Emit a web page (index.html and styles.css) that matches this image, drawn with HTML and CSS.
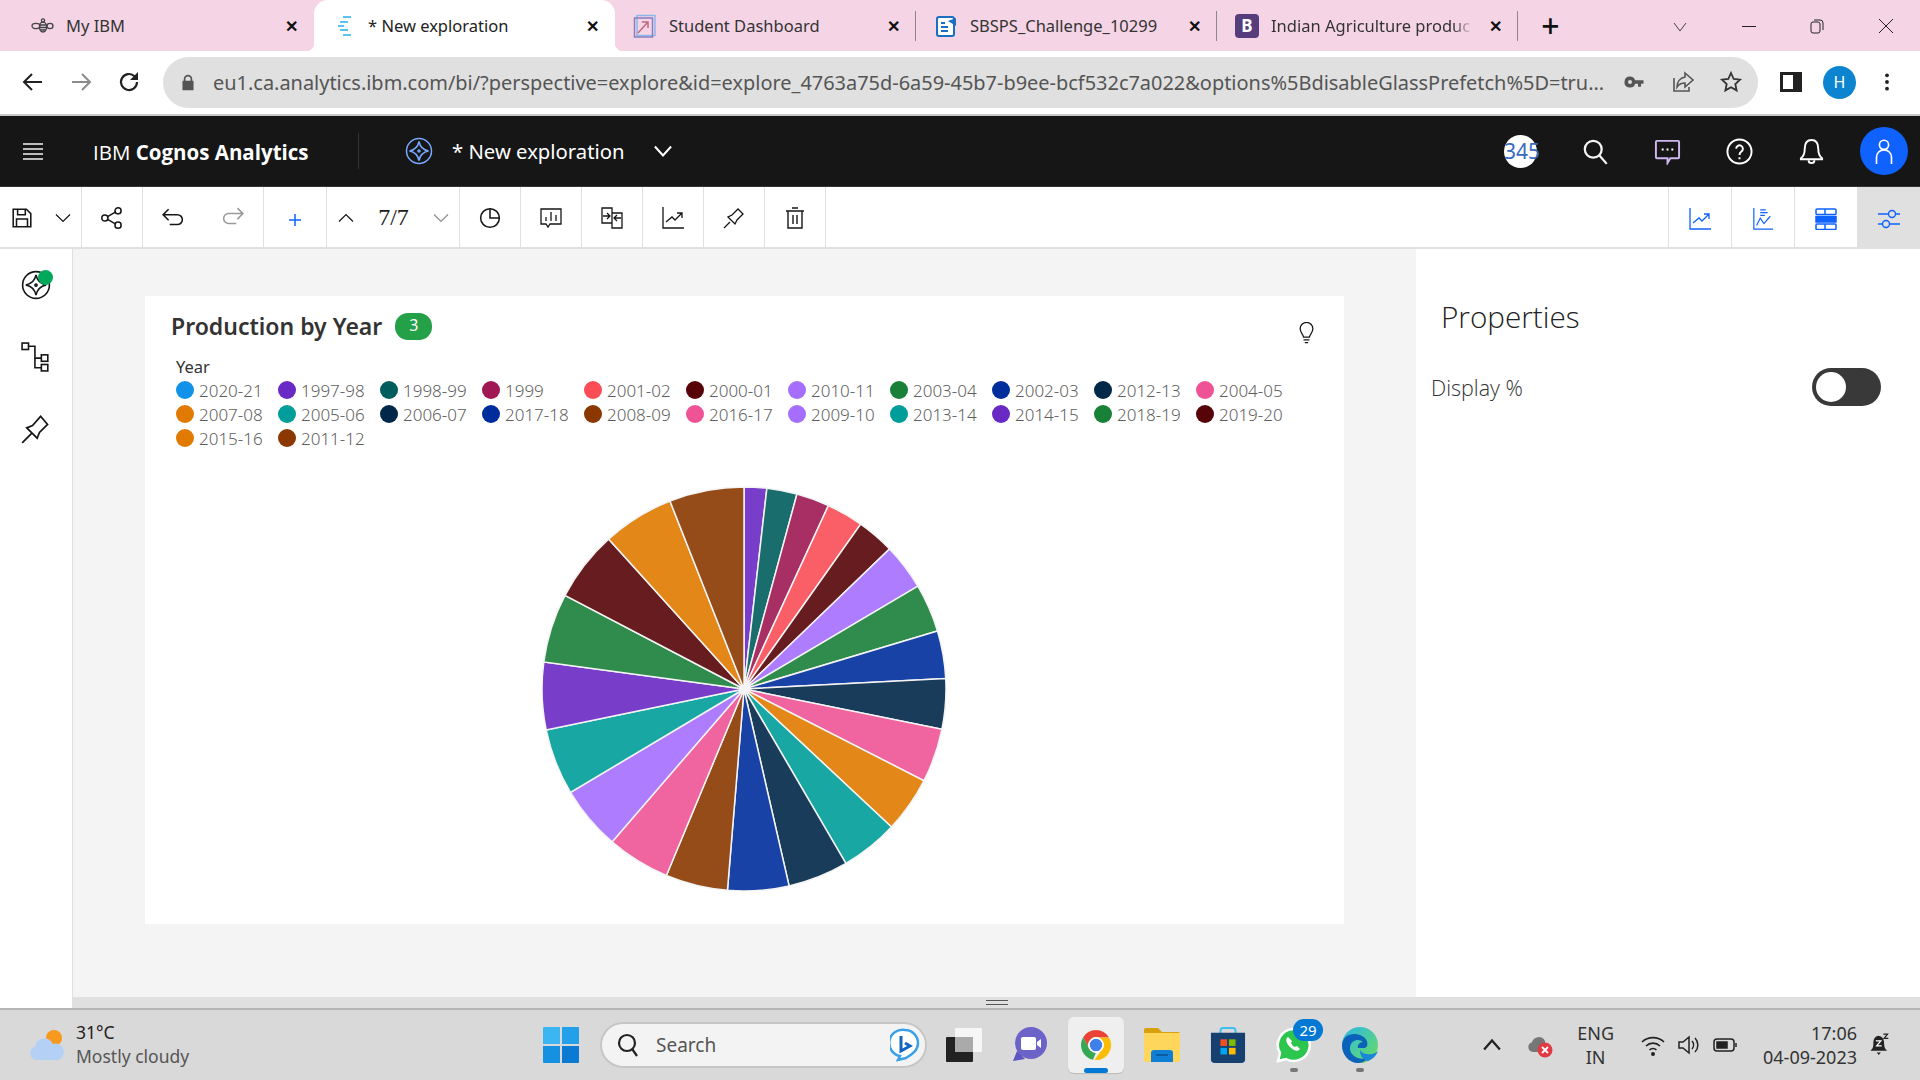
FILE: index.html
```html
<!DOCTYPE html>
<html lang="en">
<head>
    <meta charset="UTF-8">
    <title>New exploration - IBM Cognos Analytics</title>
    <link rel="stylesheet" href="styles.css">
</head>
<body>
    <div class="tabstrip">
        <div class="tab tab-first">
            <svg class="tab-icon" viewBox="0 0 24 24" fill="none" stroke="#444" stroke-width="1.3"><ellipse cx="13" cy="13" rx="3.6" ry="5"/><path d="M10 11h6M9.6 13.5h6.8M10 16h6"/><ellipse cx="6" cy="12" rx="4" ry="2.6"/><ellipse cx="20" cy="12" rx="3" ry="2.6"/><circle cx="13" cy="6.5" r="1.6"/></svg>
            <span class="tab-title">My IBM</span>
            <span class="tab-close">&#10005;</span>
        </div>
        <div class="tab tab-active">
            <svg class="tab-icon" viewBox="0 0 24 24"><path d="M11 2h8v2h-8zM8 7h8v2H8zM6 11h6v2H6zM8 15h8v2H8zM11 20h8v2h-8z" fill="#5cc3f0"/></svg>
            <span class="tab-title">* New exploration</span>
            <span class="tab-close">&#10005;</span>
        </div>
        <div class="tab tab-sep">
            <svg class="tab-icon" viewBox="0 0 24 24" fill="none"><rect x="4" y="1.5" width="18" height="20" stroke="#8ab8e8" stroke-width="1.5"/><rect x="1.5" y="4" width="18" height="19" stroke="#8a7cc0" stroke-width="1.5"/><path d="M5 19L14 9M9 8h6v6" stroke="#c06a80" stroke-width="1.5"/></svg>
            <span class="tab-title">Student Dashboard</span>
            <span class="tab-close">&#10005;</span>
        </div>
        <div class="tab tab-sep">
            <svg class="tab-icon" viewBox="0 0 24 24" fill="none"><rect x="3" y="3" width="17" height="19" rx="2" fill="#fff" stroke="#1a6fc0" stroke-width="2"/><path d="M7 9h4M7 13h7M7 17h7" stroke="#1a6fc0" stroke-width="2"/><path d="M14 7l8-3v8z" fill="#1a6fc0"/></svg>
            <span class="tab-title">SBSPS_Challenge_10299</span>
            <span class="tab-close">&#10005;</span>
        </div>
        <div class="tab tab-sep">
            <span class="bootstrap-mark">B</span>
            <span class="tab-title tab-title-fade">Indian Agriculture produc</span>
            <span class="tab-close">&#10005;</span>
        </div>
        <span class="new-tab">+</span>
        <div class="window-controls">
            <svg viewBox="0 0 16 16" fill="none" stroke="#444"><path d="M2 5l6 8 6-8"/></svg>
            <svg viewBox="0 0 16 16" fill="none" stroke="#222"><path d="M1 8.5h14"/></svg>
            <svg viewBox="0 0 16 16" fill="none" stroke="#222"><rect x="2" y="4" width="9" height="11" rx="2"/><path d="M5 2h6a3 3 0 0 1 3 3v7"/></svg>
            <svg viewBox="0 0 16 16" fill="none" stroke="#222"><path d="M1 1l14 14M15 1L1 15"/></svg>
        </div>
    </div>

    <div class="addressbar">
        <div class="nav-buttons">
            <svg viewBox="0 0 24 24" fill="none" stroke="#222" stroke-width="2"><path d="M21 12H4M11 4l-8 8 8 8"/></svg>
            <svg viewBox="0 0 24 24" fill="none" stroke="#8a8a8a" stroke-width="2"><path d="M3 12h17M13 4l8 8-8 8"/></svg>
            <svg viewBox="0 0 24 24" fill="none" stroke="#222" stroke-width="2.2"><path d="M20 12a8 8 0 1 1-2.500-5.800"/><path d="M21 2v8h-8z" fill="#222" stroke="none"/></svg>
        </div>
        <div class="omnibox">
            <svg class="lock" viewBox="0 0 16 20"><path d="M3 8V6a5 5 0 0 1 10 0v2h1.5v11h-13V8zm2 0h6V6a3 3 0 0 0-6 0z" fill="#555"/></svg>
            <span class="url">eu1.ca.analytics.ibm.com/bi/?perspective=explore&amp;id=explore_4763a75d-6a59-45b7-b9ee-bcf532c7a022&amp;options%5BdisableGlassPrefetch%5D=tru...</span>
            <svg class="omni-icon" viewBox="0 0 24 24" fill="#555"><path d="M7 6.5a5.5 5.5 0 1 0 5.2 7.2H15v3h3v-3h2.5v-3.4h-8.3A5.5 5.5 0 0 0 7 6.5zm0 3.5a2 2 0 1 1 0 4 2 2 0 0 1 0-4z"/></svg>
            <svg class="omni-icon" viewBox="0 0 24 24" fill="none" stroke="#555" stroke-width="1.6"><path d="M3 8v13h15v-4"/><path d="M14 3l8 7-8 7v-4c-4 0-6 1-8 4 0-5 3-9 8-10z"/></svg>
            <svg class="omni-icon" viewBox="0 0 24 24" fill="none" stroke="#333" stroke-width="1.8"><path d="M12 3l2.7 6 6.3.7-4.7 4.3 1.3 6.4-5.600-3.200-5.600 3.200 1.300-6.400L3 9.700 9.300 9z"/></svg>
        </div>
        <div class="browser-actions">
            <svg class="side-panel" viewBox="0 0 22 20"><path d="M0 0h22v20H0z" fill="#222"/><path d="M3 3h10v14H3z" fill="#fff"/></svg>
            <span class="profile">H</span>
            <svg viewBox="0 0 24 24" fill="#222"><circle cx="12" cy="4" r="2.300"/><circle cx="12" cy="12" r="2.300"/><circle cx="12" cy="20" r="2.300"/></svg>
        </div>
    </div>

    <header class="appbar">
        <svg class="hamburger" viewBox="0 0 20 20" stroke="#f4f4f4" stroke-width="1.500"><path d="M0 3h20M0 8h20M0 13h20M0 18h20"/></svg>
        <div class="brand">IBM <b>Cognos Analytics</b></div>
        <svg class="explore-icon" viewBox="0 0 28 28" fill="none" stroke="#78a9ff" stroke-width="1.500"><circle cx="14" cy="14" r="12.500"/><path d="M14 4.500c1 5 4.500 8.500 9.500 9.500-5 1-8.500 4.500-9.500 9.500-1-5-4.500-8.500-9.500-9.500 5-1 8.500-4.500 9.500-9.500z"/><circle cx="14" cy="14" r="1"/></svg>
        <span class="explore-title">* New exploration</span>
        <svg class="explore-chevron" viewBox="0 0 20 20" fill="none" stroke="#fff" stroke-width="2.200"><path d="M1 5l9 10 9-10"/></svg>
        <div class="appbar-right">
            <span class="count-badge">345</span>
            <svg viewBox="0 0 24 24" fill="none" stroke="#f4f4f4" stroke-width="2"><circle cx="10" cy="10" r="7.500"/><path d="M15.500 15.500L22 23"/></svg>
            <svg viewBox="0 0 28 28" fill="none" stroke="#cdb8f0" stroke-width="2"><path d="M3 3h22a1 1 0 0 1 1 1v16a1 1 0 0 1-1 1h-8l-3 5v-5H3a1 1 0 0 1-1-1V4a1 1 0 0 1 1-1z"/><path d="M8 12h2M13 12h2M18 12h2" stroke="#fff"/></svg>
            <svg viewBox="0 0 28 28" fill="none" stroke="#fff" stroke-width="2"><circle cx="14" cy="14" r="12.500"/><path d="M10.500 11a3.500 3.500 0 1 1 5.500 3c-1.500 1-2 1.500-2 3.500M14 20v2"/></svg>
            <svg viewBox="0 0 28 28" fill="none" stroke="#fff" stroke-width="2"><path d="M14 2c-5 0-7 4-7 9 0 5-1 8-4 10v1h22v-1c-3-2-4-5-4-10 0-5-2-9-7-9z"/><path d="M11 23a3 3 0 0 0 6 0"/></svg>
            <span class="user-avatar"><svg viewBox="0 0 24 32" fill="none" stroke="#fff" stroke-width="2"><circle cx="12" cy="8" r="5.500"/><path d="M3 31V23a9 9 0 0 1 18 0v8"/></svg></span>
        </div>
    </header>

    <div class="toolbar">
        <div class="tool-group">
            <span class="tool tool-save"><svg viewBox="0 0 20 20" fill="none" stroke="#161616" stroke-width="1.400"><path d="M2 2h12l4 4v12H2z"/><path d="M6 2v5h7V2M5 18v-7h10v7"/></svg></span>
            <span class="tool tool-chev"><svg viewBox="0 0 16 16" fill="none" stroke="#161616" stroke-width="1.200"><path d="M1 4.500l7 7 7-7"/></svg></span>
        </div>
        <div class="tool-group">
            <span class="tool tool-wide"><svg viewBox="0 0 20 20" fill="none" stroke="#161616" stroke-width="1.400"><circle cx="15.500" cy="3.500" r="2.800"/><circle cx="3.500" cy="10" r="2.800"/><circle cx="15.500" cy="16.500" r="2.800"/><path d="M6 8.700l7-4M6 11.300l7 4"/></svg></span>
        </div>
        <div class="tool-group">
            <span class="tool tool-wide"><svg viewBox="0 0 20 20" fill="none" stroke="#161616" stroke-width="1.400"><path d="M1 7h13a4.500 4.500 0 0 1 0 9H7M6 2L1 7l5 5"/></svg></span>
            <span class="tool tool-wide"><svg viewBox="0 0 20 20" fill="none" stroke="#9a9a9a" stroke-width="1.400"><path d="M19 6H6a4.500 4.500 0 0 0 0 9h7M14 1l5 5-5 5"/></svg></span>
        </div>
        <div class="tool-group">
            <span class="tool tool-plus"><svg viewBox="0 0 14 14" stroke="#0f62fe" stroke-width="1.500"><path d="M7 1v12M1 7h12"/></svg></span>
        </div>
        <div class="tool-group">
            <span class="tool tool-up"><svg viewBox="0 0 16 16" fill="none" stroke="#161616" stroke-width="1.200"><path d="M1 11.500l7-7 7 7"/></svg></span>
            <span class="page-count">7/7</span>
            <span class="tool tool-chev"><svg viewBox="0 0 16 16" fill="none" stroke="#8d8d8d" stroke-width="1.200"><path d="M1 4.500l7 7 7-7"/></svg></span>
        </div>
        <div class="tool-group">
            <span class="tool tool-wide"><svg viewBox="0 0 20 20" fill="none" stroke="#161616" stroke-width="1.400"><circle cx="10" cy="10" r="8.500"/><path d="M10 1.500V10h8.500"/></svg></span>
        </div>
        <div class="tool-group">
            <span class="tool tool-wide"><svg viewBox="0 0 22 20" fill="none" stroke="#161616" stroke-width="1.300"><path d="M1 1h20v15H10l-2 3-2-3H1z"/><path d="M6 9v4M11 4v9M16 7v6"/></svg></span>
        </div>
        <div class="tool-group">
            <span class="tool tool-wide"><svg viewBox="0 0 22 22" fill="none" stroke="#161616" stroke-width="1.300"><path d="M1 1h10v15H1zM11 6h10v15H11z"/><path d="M2 9h7M6 6l3 3-3 3M20 11h-7M16 8l-3 3 3 3"/></svg></span>
        </div>
        <div class="tool-group">
            <span class="tool tool-wide"><svg viewBox="0 0 22 22" fill="none" stroke="#161616" stroke-width="1.300"><path d="M1 0v21h21"/><path d="M4 15l6-5 3 3 7-7M15 6h5v5"/></svg></span>
        </div>
        <div class="tool-group">
            <span class="tool tool-wide"><svg viewBox="0 0 22 22" fill="none" stroke="#161616" stroke-width="1.300"><path d="M1 21l6-6M5 10l7 7 2-4 6-6-5-5-6 6z"/></svg></span>
        </div>
        <div class="tool-group">
            <span class="tool tool-wide"><svg viewBox="0 0 20 22" fill="none" stroke="#161616" stroke-width="1.400"><path d="M1 4h18M3 4v17h14V4M7 1h6M8 8v9M12 8v9"/></svg></span>
        </div>
        <div class="toolbar-right">
            <span class="tool tool-right"><svg viewBox="0 0 22 22" fill="none" stroke="#0f62fe" stroke-width="1.300"><path d="M1 0v21h21"/><path d="M4 15l6-5 3 3 7-7M15 6h5v5"/></svg></span>
            <span class="tool tool-right"><svg viewBox="0 0 22 24" fill="none" stroke="#0f62fe" stroke-width="1.300"><path d="M1 0v23h21"/><path d="M4 19l4-8 4 6 7-8M8 2h6M8 5h8M8 8h5"/></svg></span>
            <span class="tool tool-right"><svg viewBox="0 0 22 22" fill="none" stroke="#0f62fe" stroke-width="1.500"><rect x="1" y="1" width="20" height="5.500" rx="1"/><rect x="1" y="8.500" width="20" height="5.500" fill="#0f62fe"/><rect x="1" y="16" width="20" height="5.500" rx="1"/><path d="M10 1v5.500M10 16v5.500"/></svg></span>
            <span class="tool tool-right tool-selected"><svg viewBox="0 0 22 22" fill="none" stroke="#0f62fe" stroke-width="1.400"><path d="M0 6h10M18 6h4M0 16h4M12 16h10"/><circle cx="14" cy="6" r="3.500"/><circle cx="8" cy="16" r="3.500"/></svg></span>
        </div>
    </div>

    <div class="workspace">
        <nav class="rail">
            <span class="rail-item rail-explore">
                <svg viewBox="0 0 28 28" fill="none" stroke="#161616" stroke-width="1.500"><circle cx="14" cy="14" r="12.500"/><path d="M14 4.500c1 5 4.500 8.500 9.500 9.500-5 1-8.500 4.500-9.500 9.500-1-5-4.500-8.500-9.500-9.500 5-1 8.500-4.500 9.500-9.500z"/><circle cx="14" cy="14" r="1"/></svg>
                <span class="rail-dot"></span>
            </span>
            <span class="rail-item"><svg viewBox="0 0 28 28" fill="none" stroke="#161616" stroke-width="1.500"><rect x="1" y="1" width="6" height="6"/><rect x="19" y="12" width="6" height="6"/><rect x="19" y="21" width="6" height="6"/><path d="M7 4h6v20h6M13 15h6"/></svg></span>
            <span class="rail-item"><svg viewBox="0 0 26 26" fill="none" stroke="#161616" stroke-width="1.500"><path d="M1 25l8-8M5 12l9 9 2-5 7-7-6-7-7 8z"/></svg></span>
        </nav>

        <main class="canvas">
            <section class="card">
                <div class="card-head">
                    <h2 class="card-title">Production by Year</h2>
                    <span class="score">3</span>
                    <svg class="bulb" viewBox="0 0 18 26" fill="none" stroke="#161616" stroke-width="1.500"><path d="M5.500 18c0-3-4-5-4-10a7.500 7.500 0 0 1 15 0c0 5-4 7-4 10z"/><path d="M5.500 21h7M7 24.500h4"/></svg>
                </div>
                <div class="legend-title">Year</div>
                <div class="legend">
                    <span class="legend-item"><i class="c-blue"></i>2020-21</span>
                    <span class="legend-item"><i class="c-purple"></i>1997-98</span>
                    <span class="legend-item"><i class="c-teal"></i>1998-99</span>
                    <span class="legend-item"><i class="c-magenta"></i>1999</span>
                    <span class="legend-item"><i class="c-coral"></i>2001-02</span>
                    <span class="legend-item"><i class="c-maroon"></i>2000-01</span>
                    <span class="legend-item"><i class="c-lilac"></i>2010-11</span>
                    <span class="legend-item"><i class="c-green"></i>2003-04</span>
                    <span class="legend-item"><i class="c-cobalt"></i>2002-03</span>
                    <span class="legend-item"><i class="c-navy"></i>2012-13</span>
                    <span class="legend-item"><i class="c-pink"></i>2004-05</span>
                    <span class="legend-item"><i class="c-orange"></i>2007-08</span>
                    <span class="legend-item"><i class="c-aqua"></i>2005-06</span>
                    <span class="legend-item"><i class="c-navy"></i>2006-07</span>
                    <span class="legend-item"><i class="c-cobalt"></i>2017-18</span>
                    <span class="legend-item"><i class="c-brown"></i>2008-09</span>
                    <span class="legend-item"><i class="c-pink"></i>2016-17</span>
                    <span class="legend-item"><i class="c-lilac"></i>2009-10</span>
                    <span class="legend-item"><i class="c-aqua"></i>2013-14</span>
                    <span class="legend-item"><i class="c-purple"></i>2014-15</span>
                    <span class="legend-item"><i class="c-green"></i>2018-19</span>
                    <span class="legend-item"><i class="c-maroon"></i>2019-20</span>
                    <span class="legend-item"><i class="c-orange"></i>2015-16</span>
                    <span class="legend-item"><i class="c-brown"></i>2011-12</span>
                </div>
                <svg id="pie" class="pie" viewBox="-205 -205 410 410"></svg>
            </section>
        </main>

        <aside class="properties">
            <h2 class="properties-title">Properties</h2>
            <div class="prop-row">
                <span>Display %</span>
                <span class="toggle"><span class="toggle-knob"></span></span>
            </div>
        </aside>
    </div>

    <div class="resize-strip"><span class="resize-handle"></span></div>

    <footer class="taskbar">
        <div class="weather">
            <svg viewBox="0 0 36 36"><circle cx="25" cy="11" r="8" fill="#f59a1f"/><path d="M8 33a7 7 0 0 1-2-13.600A9.500 9.500 0 0 1 24 17a7 7 0 0 1 5 16z" fill="#b5d0f5"/></svg>
            <div class="weather-text">
                <span>31°C</span>
                <span class="weather-sub">Mostly cloudy</span>
            </div>
        </div>
        <svg class="start" viewBox="0 0 36 36"><path d="M0 1a1 1 0 0 1 1-1h16v17H0z" fill="#3bb6f2"/><path d="M19 0h16a1 1 0 0 1 1 1v16H19z" fill="#24a0ea"/><path d="M0 19h17v17H1a1 1 0 0 1-1-1z" fill="#1690e0"/><path d="M19 19h17v16a1 1 0 0 1-1 1H19z" fill="#0a7ad2"/></svg>
        <div class="search">
            <svg viewBox="0 0 24 24" fill="none" stroke="#222" stroke-width="2.200"><circle cx="11" cy="10" r="8"/><path d="M16.500 16.500L21 23"/></svg>
            <span class="search-label">Search</span>
            <svg class="bing" viewBox="0 0 30 34" fill="none"><path d="M15 2a13 13 0 0 1 13 13c0 8-7 12-12 15l-8 2 2-4A13 13 0 0 1 15 2z" fill="#fff" stroke="#3aa0ea" stroke-width="2.500"/><path d="M11 8v15l9-5-5-3" stroke="#1465c0" stroke-width="3"/></svg>
        </div>
        <div class="apps">
            <span class="app">
                <svg viewBox="0 0 36 34"><rect x="9" y="0" width="27" height="24" rx="1" fill="#f6f6f6"/><rect x="0" y="9" width="27" height="25" rx="1" fill="#222"/><rect x="9" y="9" width="18" height="15" fill="#aaa"/></svg>
            </span>
            <span class="app">
                <svg viewBox="0 0 36 36"><circle cx="19" cy="16" r="16" fill="#6b63c8"/><path d="M1 34l4-10 8 8z" fill="#5a55c0"/><rect x="9" y="10" width="15" height="13" rx="2" fill="#fff"/><path d="M25 15l4-3v9l-4-3z" fill="#fff"/></svg>
            </span>
            <span class="app app-active">
                <svg viewBox="0 0 24 24"><path d="M12 2a10 10 0 0 1 8.660 5H12a5 5 0 0 0-4.330 7.500L3.340 7A10 10 0 0 1 12 2z" fill="#ea4335"/><path d="M3.340 7l4.330 7.500A5 5 0 0 0 12 17l-2 4.800A10 10 0 0 1 3.340 7z" fill="#34a853"/><path d="M20.660 7H12a5 5 0 0 1 4.330 7.500L11 22a10 10 0 0 0 9.660-15z" fill="#fbbc04"/><circle cx="12" cy="12" r="4.200" fill="#3f7fe8"/><circle cx="12" cy="12" r="4.800" fill="none" stroke="#fff"/></svg>
                <span class="app-marker"></span>
            </span>
            <span class="app">
                <svg viewBox="0 0 36 34"><path d="M0 2a2 2 0 0 1 2-2h12l4 4h16a2 2 0 0 1 2 2v6H0z" fill="#d9a00d"/><path d="M0 5h36v27a2 2 0 0 1-2 2H2a2 2 0 0 1-2-2z" fill="#ffd65c"/><path d="M7 34v-9a3 3 0 0 1 3-3h16a3 3 0 0 1 3 3v9z" fill="#0f7fd6"/><path d="M12 27h12" stroke="#0a4f8e" stroke-width="1.500"/></svg>
            </span>
            <span class="app">
                <svg viewBox="0 0 36 38"><path d="M10 8V4a3 3 0 0 1 3-3h10a3 3 0 0 1 3 3v4" fill="none" stroke="#3cc0f0" stroke-width="2"/><path d="M0 6h36v28a4 4 0 0 1-4 4H4a4 4 0 0 1-4-4z" fill="#16406f"/><path d="M10 13h7v7h-7z" fill="#f25022"/><path d="M19 13h7v7h-7z" fill="#7fba00"/><path d="M10 22h7v7h-7z" fill="#00a4ef"/><path d="M19 22h7v7h-7z" fill="#ffb900"/></svg>
            </span>
            <span class="app app-open">
                <svg viewBox="0 0 36 36"><path d="M18 2A16 16 0 0 0 4 26L2 34l8-2A16 16 0 1 0 18 2z" fill="#2cc64e" stroke="#fff" stroke-width="2.500"/><path d="M12 10c-3 2-2 6 2 10s8 5 10 2l-3-3-2 1c-2-1-3-2-4-4l1-2z" fill="#fff"/></svg>
                <span class="app-badge">29</span>
                <span class="app-marker-dot"></span>
            </span>
            <span class="app app-open">
                <svg viewBox="0 0 36 36"><defs><linearGradient id="edgeTop" x1="0" y1="0" x2="1" y2="1"><stop offset="0" stop-color="#2bb6e8"/><stop offset="1" stop-color="#6adf5c"/></linearGradient></defs><circle cx="18" cy="18" r="18" fill="url(#edgeTop)"/><path d="M0 18C1 7 12 5 20 9c6 3 7 10 3 12h-7c-1-3 2-6 5-6-4-4-12-2-13 5-1 6 5 13 17 12-3 3-6 4-9 4C7 36 0 28 0 18z" fill="#0b62b8"/><path d="M36 24c-2 2-6 4-11 3-3 0-6-2-7-4 0 6 3 10 8 11 5-2 8-5 10-10z" fill="#1a86d8"/></svg>
                <span class="app-marker-dot"></span>
            </span>
        </div>
        <div class="tray">
            <svg class="tray-up" viewBox="0 0 16 16" fill="none" stroke="#222" stroke-width="2"><path d="M1 12l7-8 7 8"/></svg>
            <span class="onedrive">
                <svg viewBox="0 0 26 26"><path d="M6 20a5 5 0 0 1-1-9.800A7 7 0 0 1 18 9v11z" fill="#777"/><circle cx="18" cy="18" r="7.500" fill="#e03a44"/><path d="M15 15l6 6M21 15l-6 6" stroke="#fff" stroke-width="1.800"/></svg>
            </span>
            <div class="lang"><span>ENG</span><span>IN</span></div>
            <svg class="tray-icon" viewBox="0 0 24 24" fill="none" stroke="#222" stroke-width="1.600"><path d="M1 9a16 16 0 0 1 22 0M5 13a10 10 0 0 1 14 0M8.500 17a5 5 0 0 1 7 0"/><circle cx="12" cy="21" r="1.200" fill="#222"/></svg>
            <svg class="tray-icon" viewBox="0 0 24 24" fill="none" stroke="#222" stroke-width="1.500"><path d="M2 9h4l6-5v16l-6-5H2zM15 8a6 6 0 0 1 0 8M18 5a10 10 0 0 1 0 14"/></svg>
            <svg class="tray-icon" viewBox="0 0 24 24" fill="none" stroke="#222" stroke-width="1.500"><rect x="1" y="6" width="20" height="12" rx="3"/><rect x="4" y="9" width="10" height="6" fill="#222"/><path d="M23 10v4"/></svg>
            <div class="clock"><span>17:06</span><span>04-09-2023</span></div>
            <svg class="tray-bell" viewBox="0 0 24 28" fill="#222"><path d="M10 3c-5 1-6 5-6 10 0 3-1 6-3 7v1h19v-1c-2-1-3-4-3-7 0-5-1-9-7-10z"/><path d="M8 23h5l-2.500 3z"/><path d="M7 9h6l-5 6h6" fill="none" stroke="#fff" stroke-width="1.500"/><path d="M16 1h5l-4 5h5" fill="none" stroke="#222" stroke-width="1.500"/></svg>
        </div>
    </footer>

    <script src="pie.js"></script>
</body>
</html>
```

FILE: styles.css
```css
* {
    box-sizing: border-box;
}
html, body {
    margin: 0;
    height: 1080px;
    overflow: hidden;
}
body {
    font-family: "Noto Sans", sans-serif;
    display: flex;
    flex-direction: column;
    color: #161616;
    background: #fff;
}
svg {
    display: block;
    flex: none;
}

/* browser tabs */
.tabstrip {
    height: 51px;
    display: flex;
    align-items: center;
    background: #f5d5e5;
    flex: none;
}
.tab {
    position: relative;
    width: 301px;
    height: 51px;
    display: flex;
    align-items: center;
    padding: 0 15px 0 18px;
    font-size: 16.5px;
    color: #333;
}
.tab-first {
    width: 314px;
    padding-left: 30px;
}
.tab-active {
    background: #fff;
    border-radius: 14px 14px 0 0;
    color: #222;
}
.tab-sep::after {
    content: "";
    position: absolute;
    right: 0;
    top: 11px;
    height: 30px;
    width: 1px;
    background: #8a8a8a;
}
.tab-active::before {
    content: "";
    position: absolute;
    left: -8px;
    bottom: 0;
    width: 8px;
    height: 8px;
    background: radial-gradient(circle at 0 0, transparent 8px, #fff 8.500px);
}
.tab-active::after {
    content: "";
    position: absolute;
    right: -8px;
    bottom: 0;
    width: 8px;
    height: 8px;
    background: radial-gradient(circle at 100% 0, transparent 8px, #fff 8.500px);
}
.tab-icon {
    width: 24px;
    height: 24px;
    margin-right: 12px;
}
.bootstrap-mark {
    width: 24px;
    height: 24px;
    margin-right: 12px;
    border-radius: 4px;
    background: #563d7c;
    color: #fff;
    font-weight: 700;
    font-size: 17px;
    line-height: 24px;
    text-align: center;
    flex: none;
}
.tab-title {
    flex: 1;
    white-space: nowrap;
    overflow: hidden;
}
.tab-title-fade {
    -webkit-mask-image: linear-gradient(to right, #000 90%, transparent 100%);
    mask-image: linear-gradient(to right, #000 90%, transparent 100%);
}
.tab-close {
    width: 16px;
    margin-left: 14px;
    font-size: 16px;
    font-weight: 700;
    text-align: center;
    color: #111;
}
.new-tab {
    width: 65px;
    text-align: center;
    font-size: 32px;
    line-height: 40px;
    font-weight: 500;
    color: #111;
}
.window-controls {
    margin-left: auto;
    width: 274px;
    display: flex;
    justify-content: space-around;
}
.window-controls svg {
    width: 16px;
    height: 16px;
}

/* address bar */
.addressbar {
    height: 65px;
    flex: none;
    display: flex;
    align-items: center;
    border-bottom: 2px solid #c9c9c9;
    padding-bottom: 1px;
}
.nav-buttons {
    width: 163px;
    display: flex;
    gap: 24px;
    padding-left: 21px;
}
.nav-buttons svg {
    width: 24px;
    height: 24px;
}
.omnibox {
    width: 1595px;
    height: 51px;
    border-radius: 26px;
    background: #e0e0e0;
    display: flex;
    align-items: center;
    padding: 0 15px 0 18px;
}
.lock {
    width: 14px;
    height: 17px;
    margin-right: 18px;
}
.url {
    flex: 1;
    margin-right: -6px;
    font-size: 19.950px;
    color: #555;
    white-space: nowrap;
    overflow: hidden;
}
.omni-icon {
    width: 24px;
    height: 24px;
    margin-left: 24px;
}
.browser-actions {
    flex: 1;
    display: flex;
    align-items: center;
    padding-left: 22px;
    gap: 21px;
}
.browser-actions svg {
    width: 20px;
    height: 20px;
}
.browser-actions .side-panel {
    width: 22px;
}
.profile {
    width: 33px;
    height: 33px;
    border-radius: 50%;
    background: #0d84d0;
    color: #fff;
    text-align: center;
    line-height: 33px;
    font-size: 16px;
}

/* cognos header */
.appbar {
    height: 71px;
    flex: none;
    background: #161616;
    color: #fff;
    display: flex;
    align-items: center;
    padding-left: 23px;
    border-bottom: 1px solid #333;
}
.hamburger {
    width: 20px;
    height: 20px;
    margin-right: 50px;
}
.brand {
    font-family: "Open Sans", sans-serif;
    font-size: 20.500px;
    width: 266px;
    height: 36px;
    line-height: 38px;
    border-right: 1px solid #333;
}
.brand b {
    font-weight: 700;
}
.explore-icon {
    width: 28px;
    height: 28px;
    margin: 0 19px 0 46px;
}
.explore-title {
    font-size: 20.300px;
}
.explore-chevron {
    width: 18px;
    height: 18px;
    margin-left: 29px;
}
.appbar-right {
    margin-left: auto;
    display: flex;
    align-items: center;
    padding-right: 12px;
    gap: 45px;
}
.appbar-right > svg {
    width: 27px;
    height: 27px;
}
.count-badge {
    width: 33px;
    height: 33px;
    border-radius: 50%;
    background: #fff;
    color: #3a6bc0;
    font-size: 21px;
    line-height: 33px;
    white-space: nowrap;
    text-align: center;
}
.user-avatar {
    width: 48px;
    height: 48px;
    border-radius: 50%;
    background: #0f62fe;
    display: flex;
    align-items: center;
    justify-content: center;
    margin-left: -10px;
}
.user-avatar svg {
    width: 20px;
    height: 27px;
}

/* toolbar */
.toolbar {
    height: 62px;
    flex: none;
    display: flex;
    border-bottom: 2px solid #e0e0e0;
}
.tool-group {
    display: flex;
    align-items: center;
    border-right: 1px solid #e0e0e0;
}
.tool {
    display: flex;
    align-items: center;
    justify-content: center;
    height: 100%;
}
.tool svg {
    width: 22px;
    height: 22px;
    margin-top: 1px;
}
.tool-save {
    width: 44px;
}
.tool-chev {
    width: 37px;
}
.tool-up svg, .tool-chev svg {
    width: 16px;
    height: 16px;
}
.tool-wide {
    width: 60px;
}
.tool-plus {
    width: 62px;
}
.tool-plus svg {
    width: 14px;
    height: 14px;
    margin-top: 6px;
}
.tool-up {
    width: 38px;
}
.page-count {
    width: 57px;
    font-family: "Liberation Serif", serif;
    font-size: 24px;
    text-align: center;
    color: #1c1c1c;
}
.toolbar-right {
    margin-left: auto;
    display: flex;
}
.tool-right {
    width: 63px;
    border-left: 1px solid #e0e0e0;
}
.tool-right svg {
    width: 22px;
    height: 22px;
    margin-top: 4px;
}
.tool-selected {
    background: #e0e0e0;
}

/* main area */
.workspace {
    flex: 1;
    display: flex;
    min-height: 0;
}
.rail {
    width: 73px;
    border-right: 1px solid #e0e0e0;
    display: flex;
    flex-direction: column;
    align-items: center;
    gap: 42px;
    padding-top: 21px;
    margin-bottom: -11px;
    background: #fff;
}
.rail-item {
    position: relative;
    width: 30px;
    height: 30px;
}
.rail-item svg {
    width: 30px;
    height: 30px;
}
.rail-dot {
    position: absolute;
    top: 0;
    right: -2px;
    width: 15px;
    height: 15px;
    border-radius: 50%;
    background: #00a85a;
}
.canvas {
    flex: 1;
    background: #f4f4f4;
    padding: 47px 0 0 72px;
}
.card {
    width: 1199px;
    height: 628px;
    background: #fff;
    padding: 15px 0 0 26px;
}
.card-head {
    display: flex;
    align-items: center;
    height: 30px;
    padding-right: 26px;
}
.card-title {
    margin: 0;
    font-size: 23px;
    font-weight: 600;
    color: #333;
}
.score {
    margin-left: 13px;
    width: 37px;
    height: 27px;
    border-radius: 13px;
    background: #24a148;
    color: #fff;
    font-size: 16px;
    line-height: 25px;
    text-align: center;
}
.bulb {
    margin-left: auto;
    margin-top: 14px;
    width: 17px;
    height: 22px;
    margin-right: 3px;
}
.legend-title {
    margin: 14px 0 0 5px;
    font-size: 16.500px;
    line-height: 23px;
    color: #333;
}
.legend {
    display: grid;
    grid-template-columns: repeat(11, 102px);
    grid-auto-rows: 24px;
    margin-left: 5px;
}
.legend-item {
    display: flex;
    align-items: center;
    gap: 5px;
    font-size: 17px;
    font-weight: 300;
    color: #5f5f5f;
    white-space: nowrap;
}
.legend-item i {
    width: 18px;
    height: 18px;
    border-radius: 50%;
    flex: none;
}
.c-blue { background: #1192e8; }
.c-purple { background: #6929c4; }
.c-teal { background: #005d5d; }
.c-magenta { background: #9f1853; }
.c-coral { background: #fa4d56; }
.c-maroon { background: #570408; }
.c-lilac { background: #a56eff; }
.c-green { background: #198038; }
.c-cobalt { background: #002d9c; }
.c-navy { background: #012749; }
.c-pink { background: #ee5396; }
.c-orange { background: #e07a00; }
.c-aqua { background: #009d9a; }
.c-brown { background: #8a3800; }
.pie {
    width: 410px;
    height: 410px;
    margin: 34px 0 0 368px;
}
.properties {
    width: 504px;
    background: #fff;
    padding: 0 39px 0 16px;
}
.properties-title {
    margin: 48px 0 0 9px;
    font-size: 29.700px;
    line-height: 40px;
    font-weight: 300;
    color: #222;
    font-family: "Open Sans", sans-serif;
}
.prop-row {
    display: flex;
    justify-content: space-between;
    align-items: center;
    margin-top: 31px;
    margin-left: -1px;
    font-size: 21.500px;
    font-weight: 300;
    color: #333;
    font-family: "Open Sans", sans-serif;
}
.toggle {
    width: 69px;
    height: 38px;
    border-radius: 19px;
    background: #393939;
    padding: 4px;
}
.toggle-knob {
    display: block;
    width: 30px;
    height: 30px;
    border-radius: 50%;
    background: #fff;
}
.resize-strip {
    height: 11px;
    flex: none;
    background: #e0e0e0;
    margin-left: 73px;
    display: flex;
    align-items: center;
    justify-content: center;
}
.resize-handle {
    width: 22px;
    height: 5px;
    border-top: 1px solid #555;
    border-bottom: 1px solid #555;
}

/* windows taskbar */
.taskbar {
    height: 72px;
    flex: none;
    background: #d9d9d9;
    border-top: 2px solid #b5b5b5;
    display: flex;
    align-items: center;
}
.weather {
    width: 543px;
    display: flex;
    align-items: center;
    padding-left: 29px;
    font-size: 17.500px;
    color: #222;
}
.weather svg {
    width: 36px;
    height: 36px;
    margin-right: 11px;
}
.weather-text {
    display: flex;
    flex-direction: column;
    line-height: 24px;
    margin-top: -2px;
}
.weather-sub {
    color: #555;
}
.start {
    width: 36px;
    height: 36px;
}
.search {
    margin-left: 21px;
    width: 327px;
    height: 46px;
    border-radius: 23px;
    background: #f3f3f3;
    border: 2px solid #c6c6c6;
    display: flex;
    align-items: center;
    padding: 0 5px 0 14px;
}
.search svg {
    width: 24px;
    height: 24px;
}
.search-label {
    margin-left: 16px;
    font-size: 19px;
    color: #555;
}
.search .bing {
    margin-left: auto;
    width: 30px;
    height: 34px;
}
.apps {
    margin-left: 4px;
    display: flex;
    align-items: center;
}
.app {
    position: relative;
    width: 66px;
    height: 56px;
    display: flex;
    align-items: center;
    justify-content: center;
}
.app svg {
    width: 36px;
    height: 36px;
}
.app-active {
    background: #efefef;
    border-radius: 6px;
    margin: 0 5px;
    width: 56px;
    box-shadow: 0 1px 1px #bbb;
}
.app-marker {
    position: absolute;
    left: 16px;
    bottom: 0;
    width: 24px;
    height: 5px;
    border-radius: 3px;
    background: #0078d4;
}
.app-badge {
    position: absolute;
    left: 32px;
    top: 2px;
    width: 30px;
    height: 22px;
    border-radius: 11px;
    background: #0078d4;
    color: #fff;
    font-size: 15px;
    line-height: 22px;
    text-align: center;
}
.app-marker-dot {
    position: absolute;
    left: 29px;
    bottom: 1px;
    width: 8px;
    height: 4px;
    border-radius: 2px;
    background: #777;
}
.tray {
    margin-left: auto;
    display: flex;
    align-items: center;
    padding-right: 30px;
    font-size: 18px;
    color: #333;
}
.tray-up {
    width: 18px;
    height: 18px;
}
.onedrive svg {
    width: 26px;
    height: 26px;
    margin-left: 26px;
}
.lang {
    display: flex;
    flex-direction: column;
    align-items: center;
    line-height: 24px;
    margin: 0 27px 0 24px;
}
.tray-icon {
    width: 24px;
    height: 24px;
    margin-right: 12px;
}
.clock {
    margin-left: 8px;
    width: 100px;
    display: flex;
    flex-direction: column;
    align-items: flex-end;
    line-height: 24px;
    white-space: nowrap;
}
.tray-bell {
    width: 20px;
    height: 26px;
    margin-left: 13px;
}
```

FILE: pie.js
```js
// slice ends in degrees, clockwise from the top
const ends = [6.5, 15.2, 24.7, 35.3, 46.1, 59.4, 73.3, 87, 101.5, 117, 133.1, 149.7,
    167.1, 184.7, 202.6, 220.8, 239.2, 258.3, 277.7, 297.6, 317.9, 338.5, 360];
const colors = ['#6929c4', '#005d5d', '#9f1853', '#fa4d56', '#570408', '#a56eff', '#198038', '#002d9c',
    '#012749', '#ee5396', '#e07a00', '#009d9a', '#012749', '#002d9c', '#8a3800', '#ee5396',
    '#a56eff', '#009d9a', '#6929c4', '#198038', '#570408', '#e07a00', '#8a3800'];
const radius = 202;
const pie = document.getElementById('pie');

function point(deg) {
    const rad = deg * Math.PI / 180;
    return (radius * Math.sin(rad)).toFixed(2) + ' ' + (-radius * Math.cos(rad)).toFixed(2);
}

let start = 0;
ends.forEach((end, i) => {
    const slice = document.createElementNS('http://www.w3.org/2000/svg', 'path');
    slice.setAttribute('d', `M0 0L${point(start)}A${radius} ${radius} 0 0 1 ${point(end)}Z`);
    slice.setAttribute('fill', colors[i]);
    slice.setAttribute('fill-opacity', '0.9');
    slice.setAttribute('stroke', '#f4f4f4');
    slice.setAttribute('stroke-width', '1.5');
    pie.appendChild(slice);
    start = end;
});
```
